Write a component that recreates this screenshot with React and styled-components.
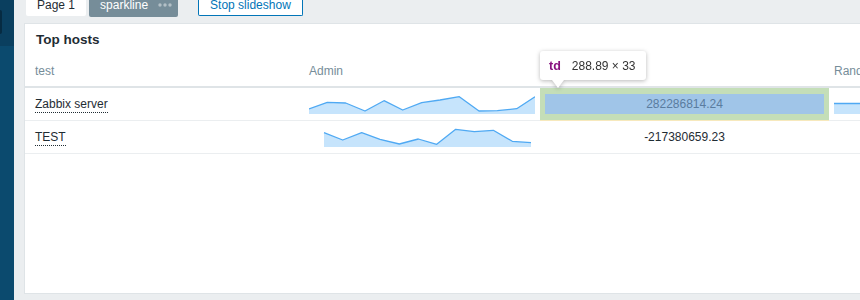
import React from 'react';
import styled, { createGlobalStyle } from 'styled-components';

const GlobalStyle = createGlobalStyle`
    body {
        margin: 0;
        overflow: hidden;
        font-family: "Liberation Sans", Arial, sans-serif;
        font-size: 12px;
        color: #1f2c33;
    }
`;

const rows = [
    {
        host: 'Zabbix server',
        value: '282286814.24',
        highlighted: true,
        points: [[0, 15], [18.3, 8.3], [36.7, 9], [56, 17], [75, 6.7], [93.7, 16], [112.7, 8.7], [131, 6], [150.3, 2.7], [170, 17], [188.3, 16.7], [207.7, 14.7], [226, 2.7]],
        rand: [[0, 9.5], [40, 9.5]],
    },
    {
        host: 'TEST',
        value: '-217380659.23',
        highlighted: false,
        points: [[15, 5.7], [33.7, 13], [52.7, 5.7], [71, 12.3], [90.3, 17], [109.3, 12], [127.7, 17.3], [146.7, 2.3], [165.3, 4.7], [184.3, 3.3], [203.3, 14.3], [222, 15.7]],
        rand: null,
    },
];

const Sparkline = ({ points, width }) => {
    const line = points.map(([x, y]) => `${x},${y}`).join(' ');
    const first = points[0][0];
    const last = points[points.length - 1][0];
    const area = `${first},20 ${line} ${last},20`;
    return (
        <SparkSvg width={width} height={20} viewBox={`0 0 ${width} 20`}>
            <polygon points={area} fill='#c6e4fc' />
            <polyline points={line} fill='none' stroke='#4fa9f3' strokeWidth='1.3' strokeLinejoin='round' />
        </SparkSvg>
    );
};

const App = () => {
    return (
        <>
            <GlobalStyle />
            <Page>
                {/* sidebar start */}
                <Sidebar>
                    <SidebarTop>
                        <SearchEdge />
                    </SidebarTop>
                </Sidebar>
                {/* sidebar end */}

                <Main>
                    {/* tabs start */}
                    <TopBar>
                        <Tab>Page 1</Tab>
                        <Tab $active>
                            sparkline
                            <svg width='14' height='4' viewBox='0 0 14 4'>
                                <circle cx='2' cy='2' r='1.7' fill='#b3c0c7' />
                                <circle cx='7' cy='2' r='1.7' fill='#b3c0c7' />
                                <circle cx='12' cy='2' r='1.7' fill='#b3c0c7' />
                            </svg>
                        </Tab>
                        <SlideButton>Stop slideshow</SlideButton>
                    </TopBar>
                    {/* tabs end */}

                    {/* widget start */}
                    <Panel>
                        <PanelHeader>Top hosts</PanelHeader>
                        <Table>
                            <colgroup>
                                <col style={{ width: 279 }} />
                                <col style={{ width: 236 }} />
                                <col style={{ width: 289 }} />
                                <col style={{ width: 200 }} />
                            </colgroup>
                            <thead>
                                <tr>
                                    <Th>test</Th>
                                    <Th>Admin</Th>
                                    <Th></Th>
                                    <Th>Random</Th>
                                </tr>
                            </thead>
                            <tbody>
                                {rows.map((row) => (
                                    <tr key={row.host}>
                                        <Td><HostLink>{row.host}</HostLink></Td>
                                        <Td><Sparkline points={row.points} width={226} /></Td>
                                        <ValueTd $highlighted={row.highlighted}>
                                            <ValueBox $highlighted={row.highlighted}>{row.value}</ValueBox>
                                        </ValueTd>
                                        <Td>{row.rand && <Sparkline points={row.rand} width={40} />}</Td>
                                    </tr>
                                ))}
                            </tbody>
                        </Table>

                        <Tooltip>
                            <TagName>td</TagName>
                            <span>288.89 × 33</span>
                        </Tooltip>
                    </Panel>
                    {/* widget end */}
                </Main>
            </Page>
        </>
    );
};

const Page = styled.div`
    display: flex;
    height: 300px;
    background: #ebeef0;
`;

const Sidebar = styled.aside`
    width: 14px;
    flex-shrink: 0;
    background: #0b4a6e;
    display: flex;
    flex-direction: column;
`;

const SidebarTop = styled.div`
    height: 46px;
    padding-top: 10px;
    box-sizing: border-box;
    background: #0a3f5f;
`;

const SearchEdge = styled.div`
    width: 2px;
    height: 24px;
    background: #062b42;
    border-radius: 0 2px 2px 0;
`;

const Main = styled.main`
    flex: 1;
    min-width: 0;
    overflow: hidden;
    display: flex;
    flex-direction: column;
    align-items: flex-start;
    padding: 0 0 6px 10px;
`;

const TopBar = styled.div`
    height: 23px;
    display: flex;
    align-items: flex-start;
    padding-left: 2px;
    flex-shrink: 0;
`;

const Tab = styled.div`
    display: flex;
    align-items: flex-start;
    gap: 10px;
    height: ${(p) => (p.$active ? '17px' : '16px')};
    box-sizing: border-box;
    padding: 0 ${(p) => (p.$active ? '6px' : '11px')} 0 11px;
    margin-right: 3px;
    line-height: 10px;
    background: ${(p) => (p.$active ? '#768d99' : '#fff')};
    color: ${(p) => (p.$active ? '#fff' : '#1f2c33')};
    border-radius: 0 0 2px 2px;

    svg {
        margin-top: 3px;
    }
`;

const SlideButton = styled.button`
    margin-left: 17px;
    height: 16px;
    box-sizing: border-box;
    padding: 0 11px;
    border: 1px solid #0275b8;
    border-top: none;
    border-radius: 0 0 2px 2px;
    background: #fff;
    color: #0275b8;
    font-family: inherit;
    font-size: 12px;
    line-height: 10px;
    display: flex;
    align-items: flex-start;
`;

const Panel = styled.section`
    position: relative;
    flex: 1;
    width: 1000px;
    background: #fff;
    border: 1px solid #dfe4e7;
`;

const PanelHeader = styled.h2`
    margin: 0;
    height: 32px;
    line-height: 32px;
    padding: 0 11px;
    font-size: 13.5px;
    font-weight: bold;
    color: #1f2c33;
`;

const Table = styled.table`
    table-layout: fixed;
    border-collapse: separate;
    border-spacing: 0;
    width: 1004px;
`;

const Th = styled.th`
    text-align: left;
    font-weight: normal;
    color: #768d99;
    padding: 8px 5px;
    line-height: 14px;
    white-space: nowrap;
    overflow: hidden;
    border-bottom: 2px solid #dfe4e7;

    &:first-child {
        padding-left: 10px;
    }
`;

const Td = styled.td`
    padding: 6px 5px;
    height: 20px;
    line-height: 20px;
    border-bottom: 1px solid #ebeef0;
    overflow: hidden;
    white-space: nowrap;

    &:first-child {
        padding-left: 10px;
    }
`;

const ValueTd = styled(Td)`
    text-align: center;
    background: ${(p) => (p.$highlighted ? '#c4deb8' : 'transparent')};
    border-bottom-color: ${(p) => (p.$highlighted ? '#f7e9bd' : '#ebeef0')};
`;

const ValueBox = styled.div`
    height: 20px;
    background: ${(p) => (p.$highlighted ? '#a0c5e8' : 'transparent')};
    color: ${(p) => (p.$highlighted ? '#5a7c9f' : '#1f2c33')};
`;

const HostLink = styled.span`
    border-bottom: 1px dotted #1f2c33;
    padding-bottom: 1px;
`;

const SparkSvg = styled.svg`
    display: block;
`;

const Tooltip = styled.div`
    position: absolute;
    left: 515px;
    top: 27px;
    height: 29px;
    padding: 0 10px 0 9px;
    display: flex;
    align-items: center;
    gap: 11px;
    background: #fff;
    border-radius: 3px;
    color: #333;
    font-size: 12px;
    filter: drop-shadow(0 1px 2px rgba(0, 0, 0, 0.28));

    &::after {
        content: '';
        position: absolute;
        left: 12px;
        top: 29px;
        border-left: 6px solid transparent;
        border-right: 6px solid transparent;
        border-top: 8px solid #fff;
    }
`;

const TagName = styled.b`
    color: #881280;
    font-size: 12.5px;
`;

export default App;
